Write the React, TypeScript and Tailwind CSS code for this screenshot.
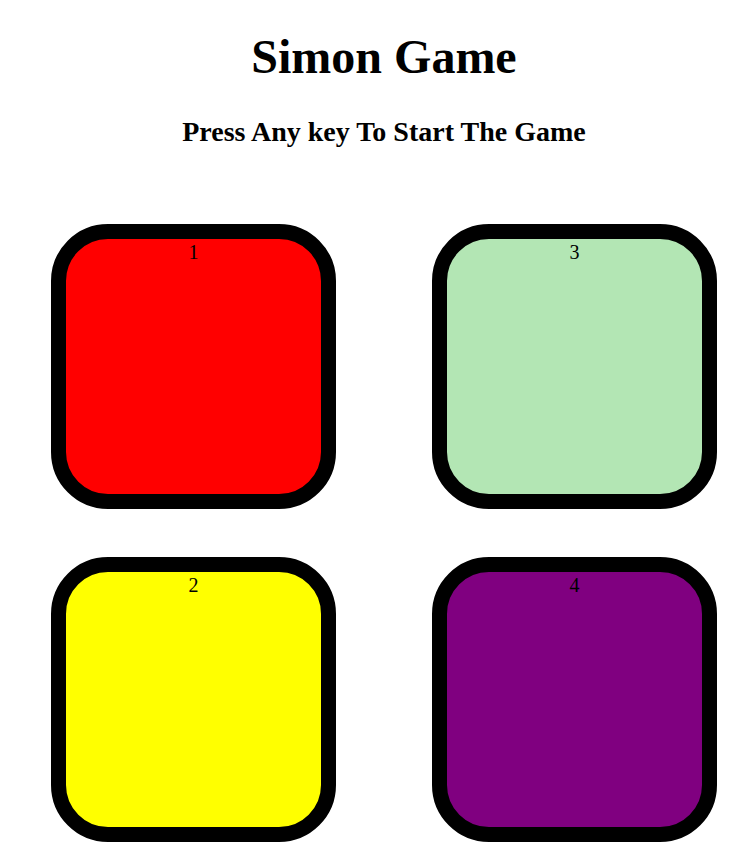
import React from "react";

const boxes = [
  { n: "1", color: "bg-[#ff0000]" },
  { n: "3", color: "bg-[#b3e6b4]" },
  { n: "2", color: "bg-[#ffff00]" },
  { n: "4", color: "bg-[#800080]" },
];

export default function App() {
  return (
    <div
      className="w-[751px] min-h-[859px] bg-white pl-[17px] text-black"
      style={{ fontFamily: '"Liberation Serif", "Times New Roman", serif' }}
    >
      <h1 className="pt-[29px] text-center text-[48px] font-bold leading-[55px]">Simon Game</h1>
      <h2 className="mt-[32px] text-center text-[28px] font-bold leading-[32px]">
        Press Any key To Start The Game
      </h2>
      <div className="mt-[76px] grid grid-cols-[285px_285px] justify-center gap-x-[96px] gap-y-[48px]">
        {boxes.map((b) => (
          <div
            key={b.n}
            className={`h-[285px] w-[285px] rounded-[20%] border-[15px] border-black ${b.color} text-center text-[20px] leading-[27px]`}
          >
            {b.n}
          </div>
        ))}
      </div>
    </div>
  );
}
